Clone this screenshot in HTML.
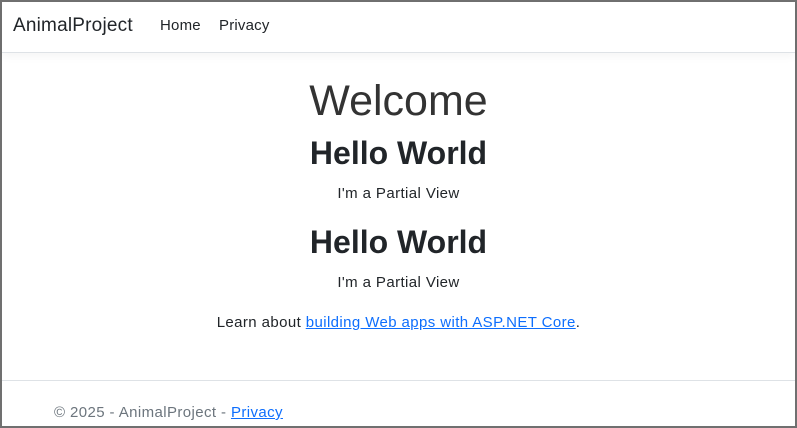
<!DOCTYPE html><html><head><style>
html,body{margin:0;padding:0;}
body{width:797px;height:428px;box-sizing:border-box;border:2px solid #707070;font-family:"Liberation Sans",sans-serif;color:#212529;position:relative;overflow:hidden;background:#fff;}
.nav{height:50px;border-bottom:1px solid #dee2e6;box-shadow:0 4px 8px rgba(0,0,0,.04);position:relative;}
.brand{position:absolute;left:11px;top:13px;font-size:19px;letter-spacing:.2px;}
.l{position:absolute;top:15px;font-size:15px;letter-spacing:.2px;}
.c{text-align:center;position:absolute;left:0;right:0;}
.s{letter-spacing:.4px;}
a{color:#0d6efd;}
</style></head><body>
<div class="nav"><span class="brand">AnimalProject</span><span class="l" style="left:158px">Home</span><span class="l" style="left:217px">Privacy</span></div>
<div class="c" style="top:75px;font-size:43px;font-weight:300;color:#333;">Welcome</div>
<div class="c" style="top:133px;font-size:32px;font-weight:bold;">Hello World</div>
<div class="c s" style="top:183px;font-size:15px;">I'm a Partial View</div>
<div class="c" style="top:222px;font-size:32px;font-weight:bold;">Hello World</div>
<div class="c s" style="top:272px;font-size:15px;">I'm a Partial View</div>
<div class="c s" style="top:312px;font-size:15px;">Learn about <a href="#">building Web apps with ASP.NET Core</a>.</div>
<div style="position:absolute;left:0;right:0;top:378px;border-top:1px solid #dee2e6;"></div>
<div class="s" style="position:absolute;left:52px;top:402px;font-size:15px;color:#6c757d;">© 2025 - AnimalProject - <a href="#">Privacy</a></div>
</body></html>
